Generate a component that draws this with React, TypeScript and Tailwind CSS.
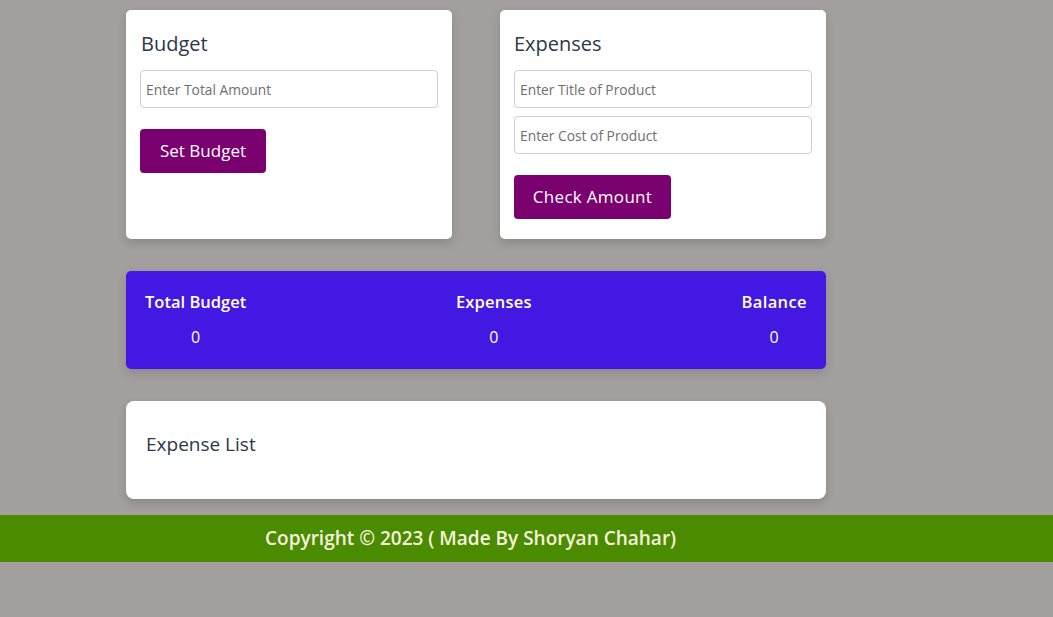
import React from "react";

const font = { fontFamily: "'Open Sans', 'Noto Sans', sans-serif" };

export default function App() {
  return (
    <div className="min-h-[617px] w-full bg-[#a39f9e]" style={font}>
      <div className="w-[700px] ml-[126px] pt-[10px]">
        <div className="flex gap-[48px]">
          <div className="w-[326px] h-[229px] bg-white rounded-[5px] shadow-[0_4px_10px_rgba(0,0,0,0.15)] px-[14px] pt-[21px]">
            <h2 className="text-[20px] text-[#2d3748] leading-[26px] mb-[13px] ml-[1px]">Budget</h2>
            <input
              placeholder="Enter Total Amount"
              className="w-full h-[38px] border border-[#cfcfcf] rounded-[4px] px-[5px] text-[13.8px] text-[#333] placeholder:text-[#6f6f6f] outline-none"
            />
            <button className="mt-[21px] h-[44px] w-[126px] bg-[#7b006f] text-white rounded-[4px] text-[17px]">
              Set Budget
            </button>
          </div>
          <div className="w-[326px] h-[229px] bg-white rounded-[5px] shadow-[0_4px_10px_rgba(0,0,0,0.15)] px-[14px] pt-[21px]">
            <h2 className="text-[20px] text-[#2d3748] leading-[26px] mb-[13px]">Expenses</h2>
            <div className="flex flex-col gap-[8px]">
              <input
                placeholder="Enter Title of Product"
                className="w-full h-[38px] border border-[#cfcfcf] rounded-[4px] px-[5px] text-[13.8px] text-[#333] placeholder:text-[#6f6f6f] outline-none"
              />
              <input
                placeholder="Enter Cost of Product"
                className="w-full h-[38px] border border-[#cfcfcf] rounded-[4px] px-[5px] text-[13.8px] text-[#333] placeholder:text-[#6f6f6f] outline-none"
              />
            </div>
            <button className="mt-[21px] h-[44px] w-[157px] bg-[#7b006f] text-white rounded-[4px] text-[17px] tracking-[0.3px]">
              Check Amount
            </button>
          </div>
        </div>

        <div className="mt-[32px] h-[98px] bg-[#4318e3] rounded-[5px] shadow-[0_4px_10px_rgba(0,0,0,0.15)] px-[19px] pt-[20px] flex justify-between text-white">
          <div className="flex flex-col items-center">
            <span className="text-[16.5px] font-semibold leading-[22px]">Total Budget</span>
            <span className="text-[16px] mt-[13px] leading-[22px]">0</span>
          </div>
          <div className="flex flex-col items-center">
            <span className="text-[16.5px] font-semibold leading-[22px] tracking-[0.2px]">Expenses</span>
            <span className="text-[16px] mt-[13px] leading-[22px]">0</span>
          </div>
          <div className="flex flex-col items-center">
            <span className="text-[16.5px] font-semibold leading-[22px] tracking-[0.4px]">Balance</span>
            <span className="text-[16px] mt-[13px] leading-[22px]">0</span>
          </div>
        </div>

        <div className="mt-[32px] h-[98px] bg-white rounded-[8px] shadow-[0_4px_10px_rgba(0,0,0,0.15)] px-[20px] pt-[30px]">
          <h3 className="text-[19px] text-[#2d3748] leading-[26px]">Expense List</h3>
        </div>
      </div>

      <footer className="mt-[16px] h-[47px] bg-[#4b8b00] flex items-center pl-[265px]">
        <span className="text-[19px] font-semibold text-[#f5f5dc]">
          Copyright © 2023 ( Made By Shoryan Chahar)
        </span>
      </footer>
    </div>
  );
}
